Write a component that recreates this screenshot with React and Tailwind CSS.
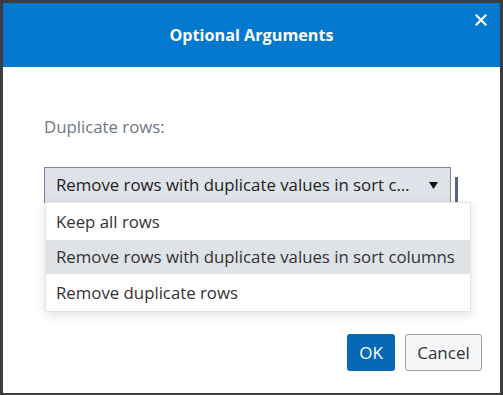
import React from 'react';

const options = [
  'Keep all rows',
  'Remove rows with duplicate values in sort columns',
  'Remove duplicate rows',
];

export default function App() {
  const selected = 1;

  return (
    <div className="w-[503px] h-[395px] bg-[#3d3d3d] pt-[3px] pl-[3px] pr-[3px] pb-[2px]" style={{ fontFamily: '"Open Sans", Lato, sans-serif' }}>
      <div className="h-full bg-white flex flex-col">
        <div className="relative h-[64px] bg-[#0378cf] flex items-center justify-center">
          <h1 className="text-white text-[16.2px] font-bold">Optional Arguments</h1>
          <button className="absolute right-[13px] top-[11px] text-white">
            <svg width="12" height="12" viewBox="0 0 12 12">
              <path d="M1.5 1.5 L10.5 10.5 M10.5 1.5 L1.5 10.5" stroke="white" strokeWidth="2.2" strokeLinecap="square" />
            </svg>
          </button>
        </div>

        <div className="flex-1 pl-[41px] pt-[50px]">
          <div className="text-[16.8px] text-[#707784] leading-[20px]">Duplicate rows:</div>

          <div className="relative mt-[30px] flex items-start">
            <div className="w-[407px] h-[36px] bg-[#dfe2e8] border border-[#7b8598] flex items-center pl-[11px] pr-[12px]">
              <span className="flex-1 text-[16.8px] text-[#222] whitespace-nowrap overflow-hidden">
                Remove rows with duplicate values in sort c…
              </span>
              <svg width="9" height="7" viewBox="0 0 9 7" className="ml-2">
                <path d="M0 0 L9 0 L4.5 7 Z" fill="#111" />
              </svg>
            </div>
            <div className="ml-[4px] mt-[10px] w-[3px] h-[28px] bg-[#5b6579]" />

            <ul className="absolute left-[1px] top-[35px] w-[426px] bg-white border border-[#e2e4e8] shadow-[0_3px_10px_rgba(0,0,0,0.12)]">
              {options.map((opt, i) => (
                <li
                  key={opt}
                  className={
                    i === selected
                      ? 'h-[34px] flex items-center pl-[10px] text-[16.8px] text-[#333] bg-[#dfe2e6]'
                      : 'h-[37px] flex items-center pl-[10px] text-[16.8px] text-[#333]'
                  }
                >
                  {opt}
                </li>
              ))}
            </ul>
          </div>
        </div>

        <div className="flex justify-end gap-[10px] pr-[18px] pb-[22px]">
          <button className="w-[48px] h-[37px] rounded-[3px] bg-[#0667b5] text-white text-[17px]">OK</button>
          <button className="w-[77px] h-[37px] rounded-[3px] bg-[#f5f6f8] border border-[#9aa0aa] text-[#333] text-[17px]">Cancel</button>
        </div>
      </div>
    </div>
  );
}
